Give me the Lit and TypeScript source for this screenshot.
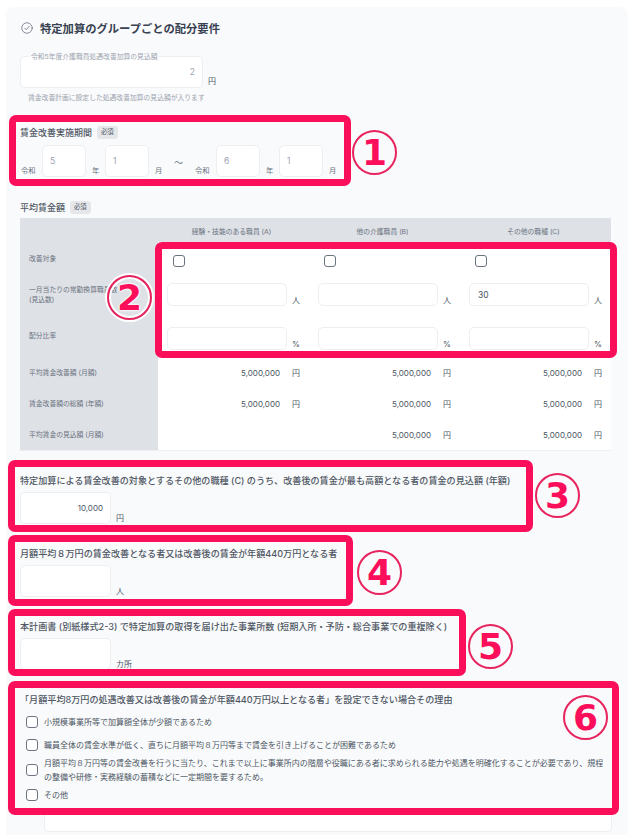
import { LitElement, html, css } from "lit";
import { customElement } from "lit/decorators.js";

const columns = ["経験・技能のある職員 (A)", "他の介護職員 (B)", "その他の職種 (C)"];

@customElement("app-root")
export class AppRoot extends LitElement {
  static styles = css`
    :host {
      display: block;
      position: relative;
      height: 835px;
      overflow: hidden;
      background: #fff;
      font-family: Inter, "Noto Sans CJK JP", sans-serif;
      color: #4b5563;
    }
    .card {
      margin: 7px 6px 0;
      padding: 12px 17px 0 14px;
      height: 840px;
      box-sizing: border-box;
      background: #f9fafb;
      border-radius: 8px;
    }
    .title {
      display: flex;
      align-items: center;
      gap: 7px;
      height: 17px;
      margin-left: 1px;
      font-size: 11.3px;
      font-weight: 700;
      color: #374151;
    }
    .title svg { width: 12px; height: 12px; }
    .input {
      box-sizing: border-box;
      background: #fff;
      border: 1px solid #eceef1;
      border-radius: 5px;
      font-size: 8.5px;
      color: #9ca3af;
      display: flex;
      align-items: center;
      padding: 0 7px;
      flex: none;
    }
    .row { display: flex; align-items: flex-end; }
    .unit { font-size: 8px; line-height: 12px; color: #4b5563; margin-left: 5px; flex: none; }
    .fieldset { width: 183px; height: 32px; justify-content: flex-end; position: relative; }
    .legend {
      position: absolute;
      left: 8px;
      top: -4px;
      padding: 0 2px;
      background: linear-gradient(#f9fafb 50%, #fff 50%);
      font-size: 6.8px;
      line-height: 8px;
      color: #9ca3af;
      white-space: nowrap;
    }
    .est { margin-top: 20px; }
    .est .unit { margin-bottom: 1px; }
    .help { font-size: 6.8px; line-height: 9px; color: #9ca3af; margin: 5px 0 0 8px; white-space: nowrap; }
    .label {
      display: flex;
      align-items: center;
      gap: 5px;
      font-size: 9px;
      font-weight: 500;
      line-height: 13px;
      color: #4f5764;
      white-space: nowrap;
    }
    .period { margin-top: 24px; }
    .badge {
      font-size: 6.3px;
      line-height: 13px;
      font-weight: 400;
      padding: 0 4px;
      background: #e5e7eb;
      border-radius: 3px;
    }
    .dates { margin-top: 6px; margin-left: 1px; }
    .dates .input { width: 44px; height: 32px; padding: 0 7px; margin-left: 6px; }
    .dates .era, .dates .unit { font-size: 7.3px; color: #6b7280; }
    .dates .unit { margin-left: 6px; width: 7px; }
    .dates .era { width: 15px; line-height: 12px; flex: none; white-space: nowrap; }
    .dates .tilde { font-size: 9px; width: 33px; text-align: center; align-self: center; padding-top: 2px; color: #6b7280; flex: none; }
    .wage { margin-top: 24px; }
    .table {
      display: grid;
      grid-template-columns: 138px 151px 151px 151px;
      grid-template-rows: 24px 34px 38px 44px 30px 31px 31px;
      margin-top: 4px;
      background: #fff;
      border-bottom: 1px solid #eceef1;
      width: 591px;
      box-sizing: border-box;
    }
    .th {
      background: #dee1e6;
      font-size: 6.8px;
      display: flex;
      align-items: center;
      justify-content: center;
      color: #6b7280;
      padding-right: 4px;
      padding-top: 1px;
    }
    .rh {
      background: #dee1e6;
      font-size: 6.8px;
      line-height: 10px;
      padding-left: 9px;
      display: flex;
      align-items: center;
      color: #6b7280;
    }
    .cell { display: flex; align-items: center; padding: 0 9px; font-size: 8px; min-width: 0; }
    .check-cell { padding-top: 4px; padding-left: 15px; }
    .box {
      box-sizing: border-box;
      width: 12px;
      height: 12px;
      border: 1px solid #6b7280;
      border-radius: 3px;
      background: #fff;
      flex: none;
    }
    .field-cell { align-items: flex-end; padding-bottom: 8px; }
    .field-cell .input { width: 120px; height: 23px; color: #4b5563; padding: 0 8px; }
    .value { justify-content: flex-end; font-size: 8px; color: #4b5563; }
    .value .unit { margin-left: 12px; font-size: 8px; }
    .group { margin-top: 24px; }
    .group .label { font-size: 9.1px; line-height: 12px; }
    .amount { margin-top: 5px; }
    .amount .input { width: 91px; height: 32px; justify-content: flex-end; padding: 0 7px; color: #4b5563; font-size: 8px; }
    .reasons { margin-top: 24px; }
    .reasons .label { font-size: 9.1px; line-height: 12px; }
    .list { display: flex; flex-direction: column; margin: 4px 5px 0 6px; }
    .opt { display: flex; align-items: center; gap: 6px; font-size: 8px; line-height: 14px; color: #4b5563; }
    .opt.single { height: 23px; }
    .opt.multi { height: 30px; margin-top: -1px; }
    .opt.last { height: 20px; }
    .other { margin: 4px 0 0 24px; width: 568px; height: 23px; background: #fff; border: 1px solid #eceef1; border-radius: 4px; box-sizing: border-box; }

    .mark { position: absolute; box-sizing: border-box; border: 7px solid #fb0f5b; border-radius: 7px; pointer-events: none; }
    .m1 { left: 9px; top: 115px; width: 342px; height: 71px; }
    .m2 { left: 155px; top: 242px; width: 462px; height: 116px; }
    .m3 { left: 8px; top: 460px; width: 525px; height: 72px; }
    .m4 { left: 8px; top: 535px; width: 345px; height: 71px; }
    .m5 { left: 8px; top: 609px; width: 458px; height: 67px; }
    .m6 { left: 8px; top: 681px; width: 611px; height: 134px; }
    .num {
      position: absolute;
      box-sizing: border-box;
      width: 45px;
      height: 45px;
      border: 2px solid #e8245f;
      border-radius: 50%;
      color: #fb0f5b;
      font-family: "DejaVu Sans", sans-serif;
      font-weight: 700;
      font-size: 36px;
      line-height: 41px;
      text-align: center;
    }
    .n1 { left: 352px; top: 130px; }
    .n2 {
      left: 107px;
      top: 275px;
      box-shadow: 0 0 0 2px #fff, inset 0 0 0 2px #fff;
      text-shadow: 0 0 2px #fff, 0 0 2px #fff, 0 0 3px #fff;
    }
    .n3 { left: 535px; top: 473px; }
    .n4 { left: 357px; top: 550px; }
    .n5 { left: 468px; top: 624px; }
    .n6 { left: 563px; top: 695px; }
  `;

  private dateInput(v: string) {
    return html`<div class="input">${v}</div>`;
  }

  private group(text: string, value: string, unit: string) {
    return html`<div class="group">
      <div class="label">${text}</div>
      <div class="row amount"><div class="input">${value}</div><span class="unit">${unit}</span></div>
    </div>`;
  }

  render() {
    const amounts = ["5,000,000", "5,000,000", "5,000,000"];
    return html`
      <div class="card">
        <div class="title">
          <svg viewBox="0 0 24 24" fill="none" stroke="#6b7280" stroke-width="1.6" stroke-linecap="round" stroke-linejoin="round">
            <circle cx="12" cy="12" r="10.5"></circle>
            <path d="M7.5 12.5l3 3 6-7"></path>
          </svg>
          特定加算のグループごとの配分要件
        </div>

        <div class="row est">
          <div class="input fieldset">
            <span class="legend">令和5年度介護職員処遇改善加算の見込額</span>2
          </div>
          <span class="unit">円</span>
        </div>
        <div class="help">賃金改善計画に設定した処遇改善加算の見込額が入ります</div>

        <div class="period">
          <div class="label">賃金改善実施期間<span class="badge">必須</span></div>
          <div class="row dates">
            <span class="era">令和</span>${this.dateInput("5")}<span class="unit">年</span>${this.dateInput("1")}<span class="unit">月</span>
            <span class="tilde">〜</span>
            <span class="era">令和</span>${this.dateInput("6")}<span class="unit">年</span>${this.dateInput("1")}<span class="unit">月</span>
          </div>
        </div>

        <div class="wage">
          <div class="label">平均賃金額<span class="badge">必須</span></div>
          <div class="table">
            <div class="th"></div>
            ${columns.map((c) => html`<div class="th">${c}</div>`)}
            <div class="rh">改善対象</div>
            ${columns.map(() => html`<div class="cell check-cell"><span class="box"></span></div>`)}
            <div class="rh">一月当たりの常勤換算職員数<br />(見込数)</div>
            ${["", "", "30"].map((v) => html`<div class="cell field-cell"><div class="input">${v}</div><span class="unit">人</span></div>`)}
            <div class="rh">配分比率</div>
            ${columns.map(() => html`<div class="cell field-cell"><div class="input"></div><span class="unit">%</span></div>`)}
            <div class="rh">平均賃金改善額 (月額)</div>
            ${amounts.map((v) => html`<div class="cell value">${v}<span class="unit">円</span></div>`)}
            <div class="rh">賃金改善額の総額 (年額)</div>
            ${amounts.map((v) => html`<div class="cell value">${v}<span class="unit">円</span></div>`)}
            <div class="rh">平均賃金の見込額 (月額)</div>
            <div class="cell value"></div>
            ${amounts.slice(1).map((v) => html`<div class="cell value">${v}<span class="unit">円</span></div>`)}
          </div>
        </div>

        ${this.group("特定加算による賃金改善の対象とするその他の職種 (C) のうち、改善後の賃金が最も高額となる者の賃金の見込額 (年額)", "10,000", "円")}
        ${this.group("月額平均８万円の賃金改善となる者又は改善後の賃金が年額440万円となる者", "", "人")}
        ${this.group("本計画書 (別紙様式2-3) で特定加算の取得を届け出た事業所数 (短期入所・予防・総合事業での重複除く)", "", "カ所")}

        <div class="reasons">
          <div class="label">「月額平均8万円の処遇改善又は改善後の賃金が年額440万円以上となる者」を設定できない場合その理由</div>
          <div class="list">
            <div class="opt single"><span class="box"></span>小規模事業所等で加算額全体が少額であるため</div>
            <div class="opt single"><span class="box"></span>職員全体の賃金水準が低く、直ちに月額平均８万円等まで賃金を引き上げることが困難であるため</div>
            <div class="opt multi"><span class="box"></span><span>月額平均８万円等の賃金改善を行うに当たり、これまで以上に事業所内の階層や役職にある者に求められる能力や処遇を明確化することが必要であり、規程の整備や研修・実務経験の蓄積などに一定期間を要するため。</span></div>
            <div class="opt last"><span class="box"></span>その他</div>
          </div>
          <div class="other"></div>
        </div>
      </div>

      <div class="mark m1"></div>
      <div class="mark m2"></div>
      <div class="mark m3"></div>
      <div class="mark m4"></div>
      <div class="mark m5"></div>
      <div class="mark m6"></div>
      <div class="num n1">1</div>
      <div class="num n2">2</div>
      <div class="num n3">3</div>
      <div class="num n4">4</div>
      <div class="num n5">5</div>
      <div class="num n6">6</div>
    `;
  }
}
